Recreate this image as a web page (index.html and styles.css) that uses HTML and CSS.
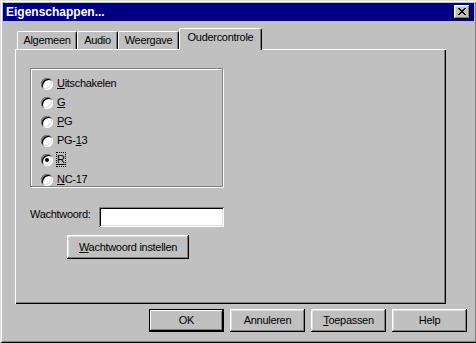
FILE: index.html
```html
<!DOCTYPE html>
<html lang="nl">
<head>
<meta charset="utf-8">
<title>Eigenschappen...</title>
<link rel="stylesheet" href="styles.css">
</head>
<body>
<div class="window">
  <div class="titlebar">
    <span class="title">Eigenschappen...</span>
    <button class="close" aria-label="Sluiten">
      <svg width="8" height="7" viewBox="0 0 8 7" shape-rendering="crispEdges">
        <path d="M0 0h2v1H0zM6 0h2v1H6zM1 1h2v1H1zM5 1h2v1H5zM2 2h4v1H2zM3 3h2v1H3zM2 4h4v1H2zM1 5h2v1H1zM5 5h2v1H5zM0 6h2v1H0zM6 6h2v1H6z" fill="#000"/>
      </svg>
    </button>
  </div>

  <div class="tabs">
    <div class="tab tab-algemeen">Algemeen</div>
    <div class="tab tab-audio">Audio</div>
    <div class="tab tab-weergave">Weergave</div>
    <div class="tab tab-ouder active">Oudercontrole</div>
  </div>

  <div class="panel">
    <div class="group">
      <label class="row"><span class="radio"></span><span class="lbl"><u>U</u>itschakelen</span></label>
      <label class="row"><span class="radio"></span><span class="lbl"><u>G</u></span></label>
      <label class="row"><span class="radio"></span><span class="lbl"><u>P</u>G</span></label>
      <label class="row"><span class="radio"></span><span class="lbl">PG-<u>1</u>3</span></label>
      <label class="row"><span class="radio checked"></span><span class="lbl focus"><u>R</u></span></label>
      <label class="row last"><span class="radio"></span><span class="lbl"><u>N</u>C-17</span></label>
    </div>

    <div class="pw-row">
      <span class="pw-label">Wachtwoord:</span>
      <input class="pw-input" type="text">
    </div>

    <button class="btn btn-set"><u>W</u>achtwoord instellen</button>
  </div>

  <div class="buttons">
    <button class="btn default">OK</button>
    <button class="btn">Annuleren</button>
    <button class="btn"><u>T</u>oepassen</button>
    <button class="btn">Help</button>
  </div>
</div>
</body>
</html>
```

FILE: styles.css
```css
html, body {
  margin: 0;
  padding: 0;
}

body {
  width: 476px;
  height: 343px;
  overflow: hidden;
  background: #c0c0c0;
  font-family: "Liberation Sans", Arial, sans-serif;
  font-size: 11px;
  letter-spacing: -0.3px;
  color: #000;
}

.window {
  width: 477px;
  height: 343px;
  box-sizing: border-box;
  padding: 3px;
  background: #c0c0c0;
  box-shadow: inset 1px 1px #dfdfdf, inset -1px -1px #000,
              inset 2px 2px #fff, inset -2px -2px #808080;
  display: flex;
  flex-direction: column;
}

.titlebar {
  height: 18px;
  flex: none;
  background: #000080;
  color: #fff;
  display: flex;
  align-items: center;
  justify-content: space-between;
  padding: 0 4px 0 3px;
}

.title {
  font-weight: bold;
  font-size: 12px;
  letter-spacing: 0;
  line-height: 14px;
}

.close {
  width: 16px;
  height: 14px;
  padding: 0;
  margin: 0;
  border: 0;
  background: #c0c0c0;
  box-shadow: inset -1px -1px #000, inset 1px 1px #fff,
              inset -2px -2px #808080, inset 2px 2px #dfdfdf;
  display: flex;
  align-items: center;
  justify-content: center;
}

.close svg {
  display: block;
  margin: 0 0 1px 0;
}

/* Tabs */
.tabs {
  display: flex;
  align-items: flex-end;
  height: 21px;
  margin: 7px 0 0 14px;
  flex: none;
}

.tab {
  height: 18px;
  box-sizing: border-box;
  border-top: 1px solid #fff;
  border-left: 1px solid #fff;
  border-right: 1px solid #000;
  border-radius: 2px 2px 0 0;
  box-shadow: inset -1px 0 #808080;
  background: #c0c0c0;
  padding-top: 2px;
  line-height: 13px;
  text-align: center;
}

.tab-algemeen { width: 60px; }
.tab-audio { width: 41px; }
.tab-weergave { width: 61px; }
.tab-ouder { width: 83px; }

.tab.active {
  height: 22px;
  margin-bottom: -1px;
  position: relative;
  z-index: 1;
  padding-top: 2px;
}

/* Panel */
.panel {
  width: 431px;
  height: 255px;
  box-sizing: border-box;
  margin-left: 12px;
  padding: 19px 0 0 15px;
  background: #c0c0c0;
  box-shadow: inset 1px 1px #fff, inset -1px -1px #000,
              inset -2px -2px #808080;
  flex: none;
}

.group {
  width: 193px;
  height: 119px;
  box-sizing: border-box;
  border: 1px solid #808080;
  box-shadow: inset 1px 1px #fff, 1px 1px #fff;
  padding: 5px 0 0 10px;
}

.row {
  display: flex;
  align-items: center;
  height: 19px;
  gap: 4px;
}

.row.last {
  margin-top: 1px;
}

.radio {
  width: 12px;
  height: 12px;
  flex: none;
  align-self: flex-start;
  margin-top: 4px;
  border-radius: 50%;
  background: #fff;
  box-shadow: inset 1px 1px #808080, inset -1px -1px #fff,
              inset 2px 2px #000, inset -2px -2px #dfdfdf;
  display: flex;
  align-items: center;
  justify-content: center;
}

.radio.checked::after {
  content: "";
  width: 4px;
  height: 4px;
  border-radius: 50%;
  background: #000;
}

.lbl {
  line-height: 13px;
}

.lbl.focus {
  outline: 1px dotted #000;
  outline-offset: 0;
}

u {
  text-underline-offset: 1px;
}

.pw-row {
  display: flex;
  align-items: flex-start;
  margin-top: 20px;
}

.pw-label {
  width: 69px;
  flex: none;
  padding-top: 1px;
  line-height: 13px;
}

.pw-input {
  width: 125px;
  height: 20px;
  box-sizing: border-box;
  margin: 0;
  padding: 0 3px;
  border: 0;
  outline: none;
  background: #fff;
  font: inherit;
  box-shadow: inset 1px 1px #808080, inset -1px -1px #fff,
              inset 2px 2px #000, inset -2px -2px #dfdfdf;
}

/* Buttons */
.btn {
  width: 75px;
  height: 23px;
  box-sizing: border-box;
  margin: 0;
  padding: 0;
  border: 0;
  background: #c0c0c0;
  font: inherit;
  letter-spacing: -0.3px;
  color: #000;
  line-height: 13px;
  box-shadow: inset -1px -1px #000, inset 1px 1px #fff,
              inset -2px -2px #808080, inset 2px 2px #dfdfdf;
}

.btn.default {
  border: 1px solid #000;
  box-shadow: inset -1px -1px #000, inset 1px 1px #fff,
              inset -2px -2px #808080;
}

.btn-set {
  display: block;
  width: 122px;
  height: 24px;
  margin: 8px 0 0 37px;
}

.buttons {
  display: flex;
  gap: 6px;
  margin: 5px 0 0 146px;
  flex: none;
}
```
